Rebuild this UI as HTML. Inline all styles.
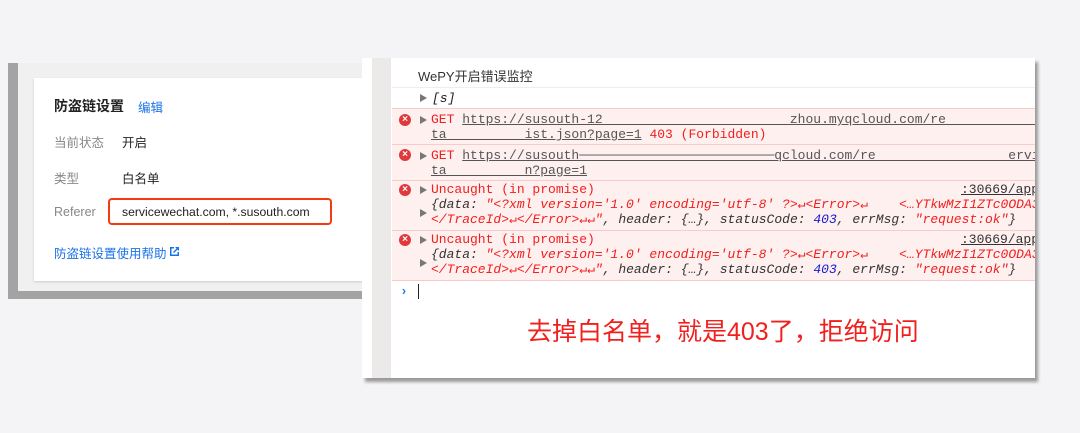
<!DOCTYPE html>
<html><head><meta charset="utf-8"><style>
body{margin:0;width:1080px;height:433px;background:#f4f4f6;position:relative;overflow:hidden;font-family:"Liberation Sans","Noto Sans CJK SC",sans-serif}
.a{position:absolute}
.m{font-family:"Liberation Mono","Noto Sans CJK SC",monospace;font-size:13px;white-space:pre;position:absolute;line-height:16px}
.red{color:#f0201e}.u{text-decoration:underline}
.row{position:absolute;left:392px;width:643px;background:#fff0f0;border-top:1px solid #f8caca}
.x{position:absolute;left:399px;width:12px;height:12px;border-radius:50%;background:#e0393b;color:#fff;font-size:10px;line-height:12px;text-align:center;font-weight:bold}
.tri{position:absolute;width:0;height:0;border-left:7px solid #777;border-top:4px solid transparent;border-bottom:4px solid transparent}
.c{font-size:12.5px}
</style></head><body>
<div class="a" style="left:8px;top:63px;width:362px;height:236px;background:#a3a3a3"></div>
<div class="a" style="left:18px;top:63px;width:352px;height:228px;background:#f0f0f0"></div>
<div class="a" style="left:34px;top:78px;width:336px;height:203px;background:#fff;box-shadow:0 1px 2px #ccc"></div>
<div class="a" style="left:54px;top:96px;font-size:14px;font-weight:bold;color:#222">防盗链设置</div>
<div class="a c" style="left:138px;top:97px;color:#1a72e8">编辑</div>
<div class="a c" style="left:54px;top:132px;color:#888">当前状态</div>
<div class="a c" style="left:122px;top:132px;color:#222">开启</div>
<div class="a c" style="left:54px;top:168px;color:#888">类型</div>
<div class="a c" style="left:122px;top:168px;color:#222">白名单</div>
<div class="a c" style="left:54px;top:205px;color:#888">Referer</div>
<div class="a" style="left:108px;top:198px;width:220px;height:23px;border:2px solid #f33a10;border-radius:4px"></div>
<div class="a" style="left:122px;top:205px;font-size:12.2px;color:#222">servicewechat.com, *.susouth.com</div>
<div class="a c" style="left:54px;top:243px;color:#1a72e8">防盗链设置使用帮助</div>
<svg class="a" style="left:169px;top:246px" width="11" height="11" viewBox="0 0 11 11"><path d="M1 1h4v1.5H2.5v6h6V6H10v4H1z" fill="#1a72e8"/><path d="M6 1h4v4L8.5 3.5 5 7 4 6l3.5-3.5z" fill="#1a72e8"/></svg>

<div class="a" style="left:362px;top:58px;width:673px;height:320px;background:#fff;box-shadow:3px 4px 3px #9a9a9a"></div>
<div class="a" style="left:0;top:0;width:1035px;height:433px;overflow:hidden">
<div class="a" style="left:372px;top:58px;width:19px;height:320px;background:#ebeae8"></div>
<div class="a" style="left:418px;top:66px;font-size:13px;color:#333">WePY开启错误监控</div>
<div class="a" style="left:392px;top:87px;width:643px;height:1px;background:#eee"></div>
<div class="tri" style="left:420px;top:94px"></div>
<div class="m" style="left:432px;top:91px;font-style:italic;color:#222">[s]</div>
<div class="row" style="top:108px;height:35px"></div>
<div class="x" style="top:114px">×</div><div class="tri" style="left:420px;top:116px"></div>
<div class="m" style="left:431px;top:112px"><span class="red">GET </span><span class="u" style="color:#555">https://susouth-12                        zhou.myqcloud.com/re                 ervic</span></div>
<div class="m" style="left:431px;top:127px"><span class="u" style="color:#555">ta          ist.json?page=1</span><span class="red"> 403 (Forbidden)</span></div>
<div class="row" style="top:144px;height:35px"></div>
<div class="x" style="top:149px">×</div><div class="tri" style="left:420px;top:152px"></div>
<div class="m" style="left:431px;top:148px"><span class="red">GET </span><span class="u" style="color:#555">https://susouth─────────────────────────qcloud.com/re                 ervic</span></div>
<div class="m" style="left:431px;top:163px"><span class="u" style="color:#555">ta          n?page=1</span></div>
<div class="row" style="top:180px;height:49px"></div>
<div class="x" style="top:184px">×</div><div class="tri" style="left:420px;top:186px"></div>
<div class="m red" style="left:431px;top:182px">Uncaught (in promise)</div>
<div class="m u" style="left:961px;top:182px;color:#333">:30669/app</div>
<div class="tri" style="left:420px;top:209px"></div>
<div class="m" style="left:431px;top:197px;font-style:italic;color:#333">{data: <span class="red">"&lt;?xml version='1.0' encoding='utf-8' ?&gt;↵&lt;Error&gt;↵    &lt;…YTkwMzI1ZTc0ODA3</span></div>
<div class="m" style="left:431px;top:212px;font-style:italic;color:#333"><span class="red">&lt;/TraceId&gt;↵&lt;/Error&gt;↵↵"</span>, header: {…}, statusCode: <span style="color:#1a1ad0">403</span>, errMsg: <span class="red">"request:ok"</span>}</div>
<div class="row" style="top:230px;height:49px;border-bottom:1px solid #f8caca"></div>
<div class="x" style="top:234px">×</div><div class="tri" style="left:420px;top:236px"></div>
<div class="m red" style="left:431px;top:232px">Uncaught (in promise)</div>
<div class="m u" style="left:961px;top:232px;color:#333">:30669/app</div>
<div class="tri" style="left:420px;top:259px"></div>
<div class="m" style="left:431px;top:247px;font-style:italic;color:#333">{data: <span class="red">"&lt;?xml version='1.0' encoding='utf-8' ?&gt;↵&lt;Error&gt;↵    &lt;…YTkwMzI1ZTc0ODA3</span></div>
<div class="m" style="left:431px;top:262px;font-style:italic;color:#333"><span class="red">&lt;/TraceId&gt;↵&lt;/Error&gt;↵↵"</span>, header: {…}, statusCode: <span style="color:#1a1ad0">403</span>, errMsg: <span class="red">"request:ok"</span>}</div>
<div class="m" style="left:400px;top:284px;color:#2a7ae2;font-weight:bold">›</div>
<div class="a" style="left:418px;top:284px;width:1px;height:15px;background:#222"></div>
<div class="a" style="left:527px;top:312px;font-size:25px;color:#f0201e">去掉白名单，就是403了，拒绝访问</div>
</div>
</body></html>
